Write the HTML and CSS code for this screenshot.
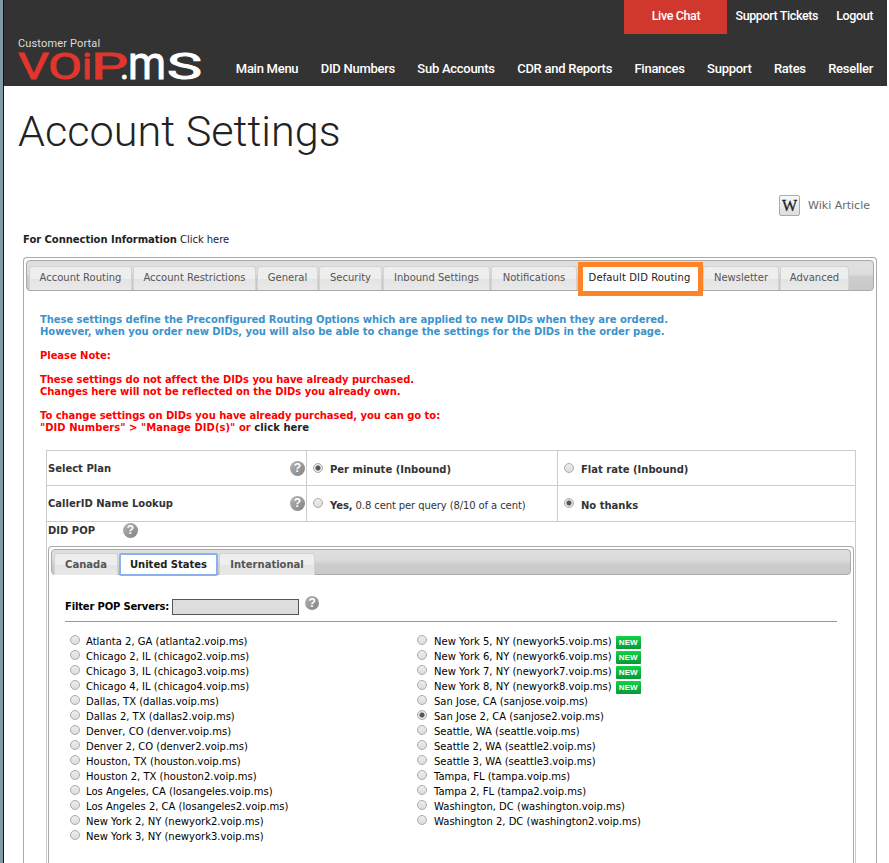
FILE: index.html
```
<!DOCTYPE html>
<html lang="en">
<head>
    <meta charset="UTF-8">
    <title>Account Settings</title>
    <link rel="stylesheet" href="styles.css">
</head>
<body>
    <header class="header">
        <div class="top-links">
            <a class="live-chat">Live Chat</a>
            <a class="tickets">Support Tickets</a>
            <a class="logout">Logout</a>
        </div>
        <div class="header-main">
            <div class="brand">
                <div class="portal">Customer Portal</div>
                <svg class="logo" width="184" height="28" viewBox="0 0 184 28">
                    <g fill="#e1362d" stroke="#e1362d">
                        <text x="0" y="27" font-size="37" textLength="31" lengthAdjust="spacingAndGlyphs">V</text>
                        <text x="30" y="27" font-size="37" textLength="34" lengthAdjust="spacingAndGlyphs">O</text>
                        <text x="64" y="27" font-size="36" textLength="10" lengthAdjust="spacingAndGlyphs">i</text>
                        <text x="73" y="27" font-size="37" textLength="37" lengthAdjust="spacingAndGlyphs">P</text>
                    </g>
                    <g fill="#fff" stroke="#fff">
                        <text x="102" y="27" font-size="37" textLength="9" lengthAdjust="spacingAndGlyphs">.</text>
                        <text x="110" y="27" font-size="46" textLength="38" lengthAdjust="spacingAndGlyphs">m</text>
                        <text x="149" y="27" font-size="36" textLength="35" lengthAdjust="spacingAndGlyphs">S</text>
                    </g>
                </svg>
            </div>
            <nav class="main-nav">
                <a>Main Menu</a>
                <a>DID Numbers</a>
                <a>Sub Accounts</a>
                <a>CDR and Reports</a>
                <a>Finances</a>
                <a>Support</a>
                <a>Rates</a>
                <a>Reseller</a>
            </nav>
        </div>
    </header>

    <main class="content">
        <h1>Account Settings</h1>
        <div class="wiki"><span class="wiki-icon">W</span><a>Wiki Article</a></div>
        <p class="connection"><b>For Connection Information</b> <a>Click here</a></p>

        <div class="tabs">
            <div class="tab-bar">
                <a class="tab t1">Account Routing</a>
                <a class="tab t2">Account Restrictions</a>
                <a class="tab t3">General</a>
                <a class="tab t4">Security</a>
                <a class="tab t5">Inbound Settings</a>
                <a class="tab t6">Notifications</a>
                <a class="tab t7 active">Default DID Routing</a>
                <a class="tab t8">Newsletter</a>
                <a class="tab t9">Advanced</a>
            </div>

            <div class="notes">
                <p class="info">These settings define the Preconfigured Routing Options which are applied to new DIDs when they are ordered.<br>However, when you order new DIDs, you will also be able to change the settings for the DIDs in the order page.</p>
                <p>Please Note:</p>
                <p>These settings do not affect the DIDs you have already purchased.<br>Changes here will not be reflected on the DIDs you already own.</p>
                <p>To change settings on DIDs you have already purchased, you can go to:<br><span class="path">"DID Numbers" &gt; "Manage DID(s)" or <a>click here</a></span></p>
            </div>

            <div class="settings">
                <div class="row plan">
                    <div class="name">Select Plan <span class="help">?</span></div>
                    <label class="choice first"><input type="radio" name="plan" checked><b>Per minute (Inbound)</b></label>
                    <label class="choice"><input type="radio" name="plan"><b>Flat rate (Inbound)</b></label>
                </div>
                <div class="row lookup">
                    <div class="name">CallerID Name Lookup <span class="help">?</span></div>
                    <label class="choice first"><input type="radio" name="lookup"><span><b>Yes,</b> 0.8 cent per query (8/10 of a cent)</span></label>
                    <label class="choice"><input type="radio" name="lookup" checked><b>No thanks</b></label>
                </div>
                <div class="pop-title">DID POP <span class="help">?</span></div>

                <div class="pop">
                    <div class="pop-bar">
                        <a class="tab p1">Canada</a>
                        <a class="tab p2 active">United States</a>
                        <a class="tab p3">International</a>
                    </div>
                    <div class="filter">
                        <b>Filter POP Servers:</b>
                        <input type="text">
                        <span class="help">?</span>
                    </div>
                    <div class="servers">
                        <div class="col">
                            <label><input type="radio" name="pop"><span>Atlanta 2, GA (atlanta2.voip.ms)</span></label>
                            <label><input type="radio" name="pop"><span>Chicago 2, IL (chicago2.voip.ms)</span></label>
                            <label><input type="radio" name="pop"><span>Chicago 3, IL (chicago3.voip.ms)</span></label>
                            <label><input type="radio" name="pop"><span>Chicago 4, IL (chicago4.voip.ms)</span></label>
                            <label><input type="radio" name="pop"><span>Dallas, TX (dallas.voip.ms)</span></label>
                            <label><input type="radio" name="pop"><span>Dallas 2, TX (dallas2.voip.ms)</span></label>
                            <label><input type="radio" name="pop"><span>Denver, CO (denver.voip.ms)</span></label>
                            <label><input type="radio" name="pop"><span>Denver 2, CO (denver2.voip.ms)</span></label>
                            <label><input type="radio" name="pop"><span>Houston, TX (houston.voip.ms)</span></label>
                            <label><input type="radio" name="pop"><span>Houston 2, TX (houston2.voip.ms)</span></label>
                            <label><input type="radio" name="pop"><span>Los Angeles, CA (losangeles.voip.ms)</span></label>
                            <label><input type="radio" name="pop"><span>Los Angeles 2, CA (losangeles2.voip.ms)</span></label>
                            <label><input type="radio" name="pop"><span>New York 2, NY (newyork2.voip.ms)</span></label>
                            <label><input type="radio" name="pop"><span>New York 3, NY (newyork3.voip.ms)</span></label>
                        </div>
                        <div class="col">
                            <label><input type="radio" name="pop"><span>New York 5, NY (newyork5.voip.ms)</span><i class="new">NEW</i></label>
                            <label><input type="radio" name="pop"><span>New York 6, NY (newyork6.voip.ms)</span><i class="new">NEW</i></label>
                            <label><input type="radio" name="pop"><span>New York 7, NY (newyork7.voip.ms)</span><i class="new">NEW</i></label>
                            <label><input type="radio" name="pop"><span>New York 8, NY (newyork8.voip.ms)</span><i class="new">NEW</i></label>
                            <label><input type="radio" name="pop"><span>San Jose, CA (sanjose.voip.ms)</span></label>
                            <label><input type="radio" name="pop" checked><span>San Jose 2, CA (sanjose2.voip.ms)</span></label>
                            <label><input type="radio" name="pop"><span>Seattle, WA (seattle.voip.ms)</span></label>
                            <label><input type="radio" name="pop"><span>Seattle 2, WA (seattle2.voip.ms)</span></label>
                            <label><input type="radio" name="pop"><span>Seattle 3, WA (seattle3.voip.ms)</span></label>
                            <label><input type="radio" name="pop"><span>Tampa, FL (tampa.voip.ms)</span></label>
                            <label><input type="radio" name="pop"><span>Tampa 2, FL (tampa2.voip.ms)</span></label>
                            <label><input type="radio" name="pop"><span>Washington, DC (washington.voip.ms)</span></label>
                            <label><input type="radio" name="pop"><span>Washington 2, DC (washington2.voip.ms)</span></label>
                        </div>
                    </div>
                </div>
            </div>
        </div>
    </main>
</body>
</html>
```

FILE: styles.css
```
* {
    margin: 0;
    padding: 0;
    box-sizing: border-box;
}

body {
    width: 889px;
    height: 863px;
    overflow: hidden;
    background: #fff;
    border-left: 3px solid #829aa3;
    padding-right: 2px;
    display: flex;
    flex-direction: column;
    font-family: Verdana, "DejaVu Sans", sans-serif;
    font-size: 10px;
    line-height: 12px;
    color: #000;
}

/* header */
.header {
    height: 86px;
    flex: none;
    background: #333;
    border-left: 1px solid #111;
    color: #fff;
    font-family: Roboto, sans-serif;
    font-size: 13px;
    font-weight: 500;
    white-space: nowrap;
}

.top-links {
    display: flex;
    justify-content: flex-end;
    height: 34px;
    line-height: 32px;
    padding-right: 14px;
    font-size: 12.5px;
    letter-spacing: -0.38px;
}

.live-chat {
    width: 103px;
    background: #d0372d;
    text-align: center;
}

.tickets {
    margin-left: 8px;
}

.logout {
    margin-left: 18px;
}

.header-main {
    display: flex;
    justify-content: space-between;
    padding: 0 14px;
}

.portal {
    margin-top: 3px;
    font-size: 11px;
    font-weight: 400;
    line-height: 14px;
    letter-spacing: 0.15px;
    color: #ddd;
}

.logo {
    display: block;
    margin-top: 1px;
    overflow: visible;
    font-family: Roboto, sans-serif;
    font-weight: 400;
    stroke-width: 0.9px;
}

.main-nav {
    display: flex;
    gap: 22.4px;
    padding-top: 27px;
    line-height: 16px;
    letter-spacing: -0.27px;
}

/* content */
.content {
    flex: 1;
    min-height: 0;
    border-left: 1px solid #111;
    padding: 0 10px 0 19px;
}

h1 {
    height: 92px;
    margin-left: -5px;
    padding: 20px 0;
    font: 300 43.2px/52px Roboto, sans-serif;
    color: #222;
}

.wiki {
    display: flex;
    justify-content: flex-end;
    align-items: center;
    height: 22px;
    margin-top: 16px;
    padding-right: 7px;
    font-size: 11px;
    color: #666;
}

.wiki a {
    padding-top: 1px;
}

.wiki-icon {
    width: 21px;
    height: 21px;
    margin-right: 8px;
    border: 1px solid #aaa;
    border-radius: 2px;
    background: linear-gradient(#fafafa, #ddd);
    color: #222;
    text-align: center;
    font: 16px/20px "Liberation Serif", serif;
    -webkit-text-stroke: 0.3px #222;
}

.connection {
    margin-top: 18px;
    letter-spacing: -0.04px;
    color: #222;
}

.connection a {
    color: #223;
}

.tabs {
    height: 606px;
    margin-top: 11px;
    border: 1px solid #aaa;
    border-bottom: 0;
    border-radius: 4px 4px 0 0;
    padding: 2px 2px 0;
}

.tab-bar {
    display: flex;
    height: 31px;
    padding: 5px 2px 0;
    border: 1px solid #aaa;
    border-radius: 4px;
    background: linear-gradient(#e0e0e0, #ddd 45%, #ccc 55%, #c9c9c9);
}

.tab {
    height: 24px;
    margin-right: 1px;
    border: 1px solid #d3d3d3;
    border-bottom: 0;
    border-radius: 3px 3px 0 0;
    background: linear-gradient(#eee 50%, #e4e4e4 52%, #e9e9e9);
    color: #555;
    text-align: center;
    line-height: 22px;
    white-space: nowrap;
}

.t1 { width: 103px; }
.t2 { width: 123px; }
.t3 { width: 61px; }
.t4 { width: 63px; }
.t5 { width: 107px; }
.t6 { width: 86px; }
.t8 { width: 76px; }
.t9 { width: 69px; }

.t7 {
    width: 125px;
    height: 34px;
    margin: -4px 0 0;
    border: 5px solid #ff8427;
    border-radius: 0;
    padding-right: 2px;
    background: #fff;
    color: #212121;
    line-height: 22px;
    letter-spacing: 0.12px;
}

.notes {
    height: 159px;
    padding: 23px 0 0 14px;
    font-weight: bold;
    letter-spacing: -0.055px;
    color: #f00;
    white-space: nowrap;
}

.notes p {
    margin-bottom: 12px;
}

.notes .info {
    color: #3b93cb;
}

.notes .path {
    letter-spacing: 0.04px;
}

.notes a {
    color: #222;
}

.settings {
    width: 810px;
    height: 413px;
    margin-left: 20px;
    border: 1px solid #ccc;
    border-bottom: 0;
}

.row {
    display: flex;
    height: 35px;
    border-bottom: 1px solid #ccc;
    color: #333;
}

.row.lookup {
    height: 36px;
}

.name {
    display: flex;
    justify-content: space-between;
    align-items: center;
    width: 260px;
    padding: 0 1px;
    border-right: 1px solid #ccc;
    font-weight: bold;
}

.plan .name {
    padding-top: 1px;
}

.choice {
    display: flex;
    align-items: center;
    padding: 4px 0 0 6px;
}

.choice.first {
    width: 251px;
    border-right: 1px solid #ccc;
}

.choice span {
    letter-spacing: -0.1px;
}

.choice input {
    margin: -5px 7px 0 0;
}

.help {
    display: inline-block;
    flex: none;
    width: 15px;
    height: 15px;
    border-radius: 50%;
    background: linear-gradient(135deg, #b5b5b5, #818181);
    color: #fff;
    font: bold 12px/15px "Liberation Sans", sans-serif;
    text-align: center;
}

input[type="radio"] {
    appearance: none;
    flex: none;
    width: 10px;
    height: 10px;
    border: 1px solid #aaa;
    border-radius: 50%;
    background: linear-gradient(#ededed, #dcdcdc);
}

input[type="radio"]:checked {
    background: radial-gradient(circle, #555 2px, #e6e6e6 3px);
}

.pop-title {
    display: flex;
    align-items: center;
    height: 18px;
    padding-left: 1px;
    font-weight: bold;
    color: #333;
}

.pop-title .help {
    margin: -2px 0 0 28px;
}

.pop {
    width: 806px;
    height: 317px;
    margin: 6px 0 0 1px;
    border: 1px solid #aaa;
    border-bottom: 0;
    border-radius: 4px 4px 0 0;
    padding: 2px 2px 0;
}

.pop-bar {
    display: flex;
    height: 26px;
    padding: 3px 2px 0;
    border: 1px solid #aaa;
    border-radius: 4px;
    background: linear-gradient(#e0e0e0, #dadada 45%, #ccc 60%, #c9c9c9);
    font-weight: bold;
}

.pop-bar .tab {
    height: 22px;
    line-height: 22px;
}

.p1 { width: 64px; }
.p3 { width: 96px; }

.pop-bar .p2 {
    width: 99px;
    height: 23px;
    border: 2px solid #8ab0ee;
    border-radius: 2px;
    background: #fff;
    color: #212121;
    line-height: 20px;
}

.filter {
    display: flex;
    align-items: center;
    height: 47px;
    margin: 0 14px;
    padding-top: 17px;
    border-bottom: 1px solid #999;
}

.filter b {
    letter-spacing: -0.17px;
}

.filter input {
    width: 127px;
    height: 16px;
    margin-left: 3px;
    border: 1px solid #555;
    background: #ddd;
}

.filter .help {
    width: 14px;
    height: 14px;
    margin: -7px 0 0 6px;
    line-height: 14px;
}

.servers {
    display: flex;
    padding: 12px 0 0 19px;
    white-space: nowrap;
}

.col {
    width: 347px;
}

.col label {
    display: flex;
    align-items: center;
    height: 15px;
}

.col input {
    margin: -4px 6px 0 0;
}

.col + .col input {
    margin-right: 7px;
}

.new {
    width: 25px;
    height: 13px;
    margin: 2px 0 0 4px;
    border-radius: 1px;
    background: linear-gradient(#12d344, #08983a);
    color: #fff;
    font: bold 8px/13px "Liberation Sans", sans-serif;
    text-align: center;
}
```
